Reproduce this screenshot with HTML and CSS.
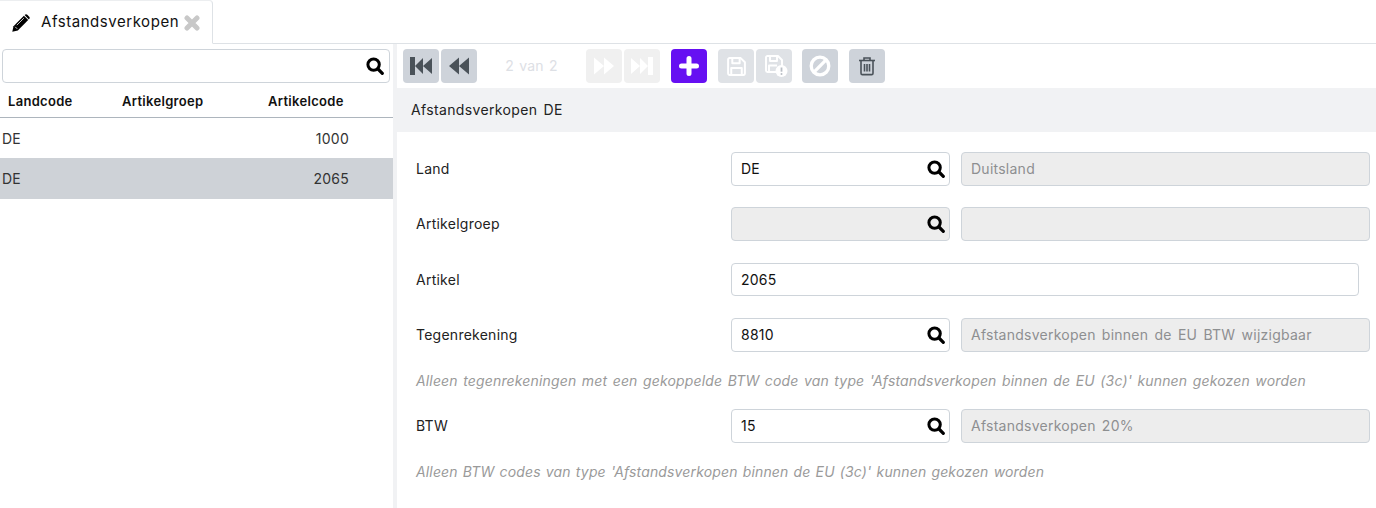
FILE: index.html
```html
<!DOCTYPE html>
<html lang="nl">
<head>
<meta charset="utf-8">
<title>Afstandsverkopen</title>
<link rel="stylesheet" href="styles.css">
</head>
<body>
<svg class="defs" aria-hidden="true">
  <symbol id="i-search" viewBox="0 0 18 18">
    <circle cx="7.6" cy="7.6" r="5.7" fill="none" stroke="currentColor" stroke-width="3"/>
    <path d="M12 12 16.300 16.300" fill="none" stroke="currentColor" stroke-width="3.200" stroke-linecap="round"/>
  </symbol>
</svg>
<div class="tabbar">
  <div class="tab">
    <svg class="pencil" viewBox="0 0 18 18"><path d="M0.300 17.700 1.500 12.200 11.900 1.800 16.200 6.100 5.800 16.500Z" fill="#000"/><path d="M12.900.8c.7-.7 1.700-.7 2.400 0l1.900 1.900c.7.700.7 1.700 0 2.400l-.3.300-4.300-4.300Z" fill="#000"/><path d="M3.200 12.800 5.200 14.800" stroke="#fff" stroke-width=".8"/><path d="M4.800 11.200 11.800 4.200" stroke="#fff" stroke-width=".8"/></svg>
    <span class="tab-title">Afstandsverkopen</span>
    <svg class="close" viewBox="0 0 16 16"><path d="M3 3 13 13M13 3 3 13" stroke="#c8c8c8" stroke-width="5" stroke-linecap="round"/></svg>
  </div>
</div>
<div class="main">
  <aside class="left">
    <div class="field search-field">
      <svg class="search"><use href="#i-search"/></svg>
    </div>
    <div class="thead">
      <span class="c1">Landcode</span><span class="c2">Artikelgroep</span><span class="c3">Artikelcode</span>
    </div>
    <div class="row"><span class="r1">DE</span><span class="r3">1000</span></div>
    <div class="row selected"><span class="r1">DE</span><span class="r3">2065</span></div>
  </aside>
  <section class="right">
    <div class="toolbar">
      <div class="group g-nav">
        <button class="btn dark"><svg viewBox="0 0 24 20"><path d="M1 1h5v18H1ZM6 10 14 2v16ZM14 10 23 2v16Z" fill="currentColor"/></svg></button>
        <button class="btn dark"><svg viewBox="0 0 24 20"><path d="M2 10 12 1.500v17ZM12 10 22 1.500v17Z" fill="currentColor"/></svg></button>
      </div>
      <span class="pager">2 van 2</span>
      <div class="group g-next">
        <button class="btn faint"><svg viewBox="0 0 24 20"><path d="M22 10 12 1.500v17ZM12 10 2 1.500v17Z" fill="currentColor"/></svg></button>
        <button class="btn faint"><svg viewBox="0 0 24 20"><path d="M23 1h-5v18h5ZM18 10 10 2v16ZM10 10 1 2v16Z" fill="currentColor"/></svg></button>
      </div>
      <button class="btn add"><svg viewBox="0 0 20 20"><path d="M10 2.500v15M2.500 10h15" stroke="currentColor" stroke-width="5" stroke-linecap="round"/></svg></button>
      <div class="group g-save">
        <button class="btn mid"><svg viewBox="0 0 20 20"><g fill="none" stroke="currentColor" stroke-width="1.900" stroke-linejoin="round"><path d="M2 3.500C2 2.700 2.700 2 3.500 2H14L18 6V16.500C18 17.300 17.300 18 16.500 18H3.500C2.700 18 2 17.300 2 16.500Z"/><path d="M6 2V7H13V2"/><path d="M5 18V11.500H15V18"/></g></svg></button>
        <button class="btn mid"><svg viewBox="0 0 24 22"><g fill="none" stroke="currentColor" stroke-width="1.900" stroke-linejoin="round"><path d="M18 12V5L14 1H3.500C2.700 1 2 1.700 2 2.500V15.500C2 16.300 2.700 17 3.500 17H12"/><path d="M6 1V6H13V1"/><path d="M5 17V10.500H13"/></g><circle cx="17.500" cy="16" r="6" fill="currentColor"/><path d="M17.500 12.500v4.200" stroke="#b9bec5" stroke-width="1.800"/><circle cx="17.500" cy="19" r="1" fill="#b9bec5"/></svg></button>
      </div>
      <button class="btn strong cancel"><svg viewBox="0 0 20 20"><circle cx="10" cy="10" r="8" fill="none" stroke="currentColor" stroke-width="3"/><path d="M4.500 15.500 15.500 4.500" stroke="currentColor" stroke-width="3"/></svg></button>
      <button class="btn strong trash"><svg viewBox="0 0 20 20"><g fill="none" stroke="currentColor" stroke-width="1.600"><path d="M2 4.500H18"/><path d="M7 4.500V2H13V4.500"/><path d="M4 4.500V17.200C4 18 4.600 18.600 5.400 18.600H14.600C15.400 18.600 16 18 16 17.200V4.500"/><path d="M7.500 8V15.500M10 8V15.500M12.500 8V15.500"/></g></svg></button>
    </div>
    <div class="panel-head">Afstandsverkopen DE</div>
    <form class="form">
      <div class="frow r-land">
        <label>Land</label>
        <div class="field code"><span class="val">DE</span><svg class="search"><use href="#i-search"/></svg></div>
        <div class="field desc">Duitsland</div>
      </div>
      <div class="frow r-groep">
        <label>Artikelgroep</label>
        <div class="field code off"><svg class="search"><use href="#i-search"/></svg></div>
        <div class="field desc"></div>
      </div>
      <div class="frow r-art">
        <label class="lab-art">Artikel</label>
        <div class="field wide"><span class="val">2065</span></div>
      </div>
      <div class="frow r-teg">
        <label>Tegenrekening</label>
        <div class="field code"><span class="val">8810</span><svg class="search"><use href="#i-search"/></svg></div>
        <div class="field desc">Afstandsverkopen binnen de EU BTW wijzigbaar</div>
      </div>
      <p class="hint h1">Alleen tegenrekeningen met een gekoppelde BTW code van type 'Afstandsverkopen binnen de EU (3c)' kunnen gekozen worden</p>
      <div class="frow r-btw">
        <label>BTW</label>
        <div class="field code"><span class="val">15</span><svg class="search"><use href="#i-search"/></svg></div>
        <div class="field desc">Afstandsverkopen 20%</div>
      </div>
      <p class="hint h2">Alleen BTW codes van type 'Afstandsverkopen binnen de EU (3c)' kunnen gekozen worden</p>
    </form>
  </section>
</div>
</body>
</html>
```
FILE: styles.css
```css
* { box-sizing: border-box; }
html, body { margin: 0; height: 100%; overflow: hidden; }
body { font-family: Inter, "Noto Sans", sans-serif; font-size: 14px; color: #212529; background: #fff; letter-spacing: 0.25px; word-spacing: 2px; }
.defs { display: none; }

.tabbar { height: 44px; border-bottom: 1px solid #dee2e6; display: flex; }
.tab { width: 213px; height: 44px; background: #fff; border: 1px solid #dee2e6; border-width: 0 1px 1px 0; border-bottom-color: #fff; border-top-right-radius: 4px; display: flex; align-items: center; padding: 0 0 0 12px; box-shadow: inset 0 1px 0 #eceef0; }
.pencil { width: 18px; height: 18px; flex: none; margin-top: 2px; }
.tab-title { margin-left: 11px; font-size: 15px; color: #111; width: 144px; white-space: nowrap; letter-spacing: 0.55px; }
.close { width: 16px; height: 16px; margin-left: -1px; margin-top: 2px; }

.main { display: flex; height: 464px; }
.left { width: 397px; flex: none; border-right: 4px solid #f1f2f4; padding-top: 5px; }
.right { flex: 1; min-width: 0; padding-top: 5px; }

.field { border: 1px solid #ced4da; border-radius: 4px; height: 34px; position: relative; background: #fff; display: flex; align-items: center; padding: 0 0 1px 9px; white-space: nowrap; }
.search { position: absolute; right: 4px; top: 7px; width: 18px; height: 18px; color: #000; }
.search-field { margin: 0 3px 0 2px; }
.search-field .search { right: 5px; top: 7px; }

.thead { display: flex; height: 35px; border-bottom: 1px solid #adb5bd; align-items: center; font-weight: 600; font-size: 13px; color: #111; padding-top: 2px; letter-spacing: 0.3px; }
.thead span { white-space: nowrap; }
.c1 { margin-left: 8px; width: 114px; }
.c2 { width: 146px; }
.row { height: 40px; display: flex; justify-content: space-between; align-items: center; padding: 1px 44px 0 2px; color: #333; }
.row.selected { background: #ced2d7; height: 41px; padding-top: 0; }

.toolbar { height: 39px; display: flex; align-items: flex-start; padding-left: 6px; }
.group { display: flex; gap: 2px; }
.btn { width: 36px; height: 34px; border: 0; border-radius: 4px; padding: 0; display: flex; align-items: center; justify-content: center; }
.btn svg { width: 24px; height: 20px; }
.dark { background: #ced3da; color: #4a5259; }
.faint { background: #f0f0f0; color: #fff; }
.add { background: #6610f2; color: #fff; margin-left: 11px; }
.add svg { width: 20px; height: 20px; }
.mid { background: #dfe2e6; color: #fff; }
.mid svg { width: 21px; height: 21px; }
.mid + .mid svg { width: 24px; height: 22px; margin-left: 3px; }
.strong { background: #ced3da; }
.cancel { color: #fff; margin-left: 10px; }
.cancel svg { width: 22px; height: 22px; }
.trash { color: #4a5259; margin-left: 11px; }
.pager { width: 109px; text-align: center; color: #dde0e5; font-size: 14px; margin-top: 8px; word-spacing: 1px; }
.g-save { margin-left: 11px; }

.panel-head { height: 44px; background: #f1f2f4; display: flex; align-items: center; padding: 0 0 2px 14px; color: #222; letter-spacing: 0.35px; }

.form { position: relative; padding-top: 20px; }
.frow { display: flex; align-items: center; }
.frow label { width: 334px; padding: 0 0 1px 19px; color: #222; }
.frow .lab-art { padding-bottom: 0; }
.code { width: 219px; }
.desc { width: 409px; margin-left: 11px; background: #ededed; color: #8d8f91; }
.off { background: #ededed; }
.wide { width: 628px; height: 33px; padding-bottom: 0; }
.val { color: #111; }
.r-groep { margin-top: 21px; }
.r-art { margin-top: 22px; }
.r-teg { margin-top: 22px; }
.hint { margin: 0; padding-left: 19px; font-style: italic; color: #9a9a9a; font-size: 14px; white-space: nowrap; letter-spacing: 0.15px; word-spacing: 1.400px; }
.h1 { padding-top: 20px; height: 57px; }
.h2 { padding-top: 20px; word-spacing: 1px; }
```
